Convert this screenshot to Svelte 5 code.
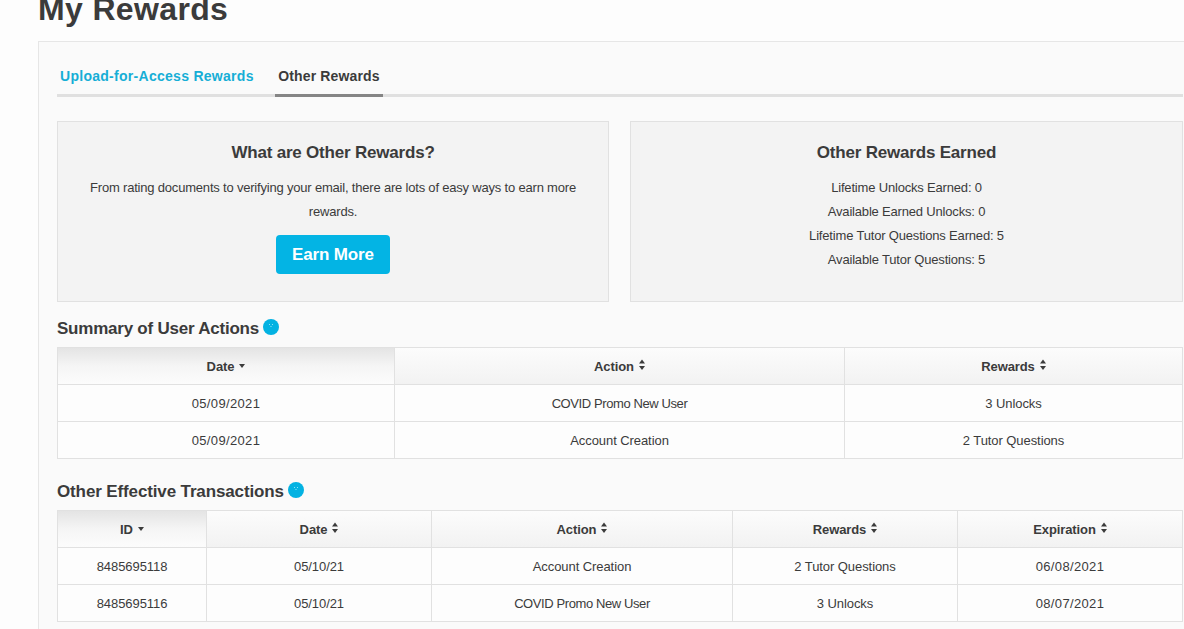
<script>
  const stats = [
    'Lifetime Unlocks Earned: 0',
    'Available Earned Unlocks: 0',
    'Lifetime Tutor Questions Earned: 5',
    'Available Tutor Questions: 5',
  ];

  const sections = [
    {
      title: 'Summary of User Actions',
      kind: 'summary',
      columns: ['Date', 'Action', 'Rewards'],
      rows: [
        ['05/09/2021', 'COVID Promo New User', '3 Unlocks'],
        ['05/09/2021', 'Account Creation', '2 Tutor Questions'],
      ],
    },
    {
      title: 'Other Effective Transactions',
      kind: 'transactions',
      columns: ['ID', 'Date', 'Action', 'Rewards', 'Expiration'],
      rows: [
        ['8485695118', '05/10/21', 'Account Creation', '2 Tutor Questions', '06/08/2021'],
        ['8485695116', '05/10/21', 'COVID Promo New User', '3 Unlocks', '08/07/2021'],
      ],
    },
  ];
</script>

<main>
  <h1>My Rewards</h1>
  <div class="panel">
    <nav>
      <a class="upload" href="#upload">Upload-for-Access Rewards</a>
      <a class="active" href="#other">Other Rewards</a>
    </nav>

    <div class="cards">
      <section class="card">
        <h2>What are Other Rewards?</h2>
        <p class="intro">From rating documents to verifying your email, there are lots of easy ways to earn more<br />rewards.</p>
        <button>Earn More</button>
      </section>
      <section class="card">
        <h2>Other Rewards Earned</h2>
        {#each stats as stat}<p>{stat}</p>{/each}
      </section>
    </div>

    {#each sections as s}
      <section class="block {s.kind}">
        <h2>
          <span>{s.title}</span>
          <svg class="help" width="16" height="16" viewBox="0 0 16 16">
            <circle cx="8" cy="8" r="8" fill="#03b2e2" />
            <path d="M6 5h1v1H6zM9 5h1v1H9zM7.500 7h1v1h-1z" fill="#8fe3f6" />
          </svg>
        </h2>
        <div class="table">
          {#each s.columns as c, i}
            <div class="th" class:sorted={i === 0}>
              <span>{c}</span>
              {#if i === 0}
                <svg width="6" height="12" viewBox="0 0 6 12"><path d="M0 5h6L3 9z" fill="#3b3b3b" /></svg>
              {:else}
                <svg width="6" height="12" viewBox="0 0 6 12"><path d="M0 4.500L3 .5l3 4zM0 7h6L3 11z" fill="#3b3b3b" /></svg>
              {/if}
            </div>
          {/each}
          {#each s.rows as row}
            {#each row as cell}
              <div
                class="td"
                class:date={/^\d\d\/\d\d\/\d{4}$/.test(cell)}
                class:promo={cell.startsWith('COVID')}
              ><span>{cell}</span></div>
            {/each}
          {/each}
        </div>
      </section>
    {/each}
  </div>
</main>

<style>
  :global(body) {
    background: #fdfdfd;
    overflow: hidden;
  }
  main {
    box-sizing: border-box;
    height: 629px;
    overflow: hidden;
    padding-left: 38px;
    font-family: 'Liberation Sans', Arial, sans-serif;
    font-size: 13px;
    color: #3b3b3b;
  }
  h1, h2, p { margin: 0; }
  h1 {
    height: 41px;
    margin-top: -11px;
    padding-bottom: 11px;
    font-size: 32px;
    line-height: 41px;
    letter-spacing: 0.35px;
    white-space: nowrap;
  }
  .panel {
    height: 620px;
    border: 1px solid #e6e6e6;
    border-right: 0;
    padding: 16px 1px 0 18px;
    background: #fafafa;
  }
  nav {
    display: flex;
    height: 36px;
    border-bottom: 3px solid #e0e0e0;
    font-size: 14px;
    font-weight: bold;
  }
  nav a {
    box-sizing: border-box;
    height: 39px;
    line-height: 36px;
    text-decoration: none;
    white-space: nowrap;
    color: #3b3b3b;
  }
  .upload {
    width: 218px;
    padding-left: 3px;
    letter-spacing: 0.28px;
    color: #16aed6;
  }
  .active {
    width: 108px;
    text-align: center;
    letter-spacing: 0.15px;
    border-bottom: 3px solid #858585;
  }
  .cards {
    display: grid;
    grid-template-columns: 552px 553px;
    column-gap: 21px;
    margin-top: 24px;
  }
  .card {
    box-sizing: border-box;
    height: 181px;
    border: 1px solid #e1e1e1;
    padding: 19px 20px 0;
    background: #f3f3f3;
    text-align: center;
  }
  h2 {
    font-size: 17px;
    line-height: 24px;
    letter-spacing: -0.2px;
  }
  .card h2 { margin-bottom: 11px; }
  p {
    line-height: 24px;
    letter-spacing: -0.18px;
    white-space: nowrap;
  }
  .intro { letter-spacing: -0.195px; }
  button {
    display: block;
    width: 114px;
    height: 39px;
    margin: 11px auto 0;
    padding: 1px 0 0;
    border: 0;
    border-radius: 4px;
    background: #03b4e4;
    color: #fff;
    font: bold 17px 'Liberation Sans', Arial, sans-serif;
    letter-spacing: -0.15px;
  }
  .block { height: 163px; }
  .block h2 {
    display: flex;
    gap: 4px;
    height: 30px;
    padding-top: 15px;
    white-space: nowrap;
  }
  .summary h2 { letter-spacing: -0.23px; }
  .transactions h2 { letter-spacing: -0.13px; }
  .help { margin-top: 2px; }
  .table {
    display: grid;
    grid-auto-rows: 37px;
    border-top: 1px solid #e1e1e1;
    border-left: 1px solid #e1e1e1;
    background: #fdfdfd;
  }
  .summary .table { grid-template-columns: 337px 450px 338px; }
  .transactions .table { grid-template-columns: 149px 225px 301px 225px 225px; }
  .th, .td {
    box-sizing: border-box;
    display: flex;
    align-items: center;
    justify-content: center;
    border-right: 1px solid #e1e1e1;
    border-bottom: 1px solid #e1e1e1;
    white-space: nowrap;
  }
  .td { letter-spacing: -0.07px; }
  .td.date { letter-spacing: 0.35px; }
  .td.promo { letter-spacing: -0.4px; }
  .th {
    gap: 5px;
    font-weight: bold;
    letter-spacing: -0.1px;
    background: linear-gradient(#fcfcfc, #f2f2f2);
  }
  .th svg { margin-top: -2px; }
  .th.sorted { background: linear-gradient(#e4e4e4, #f5f5f5 50%, #fcfcfc); }
</style>
